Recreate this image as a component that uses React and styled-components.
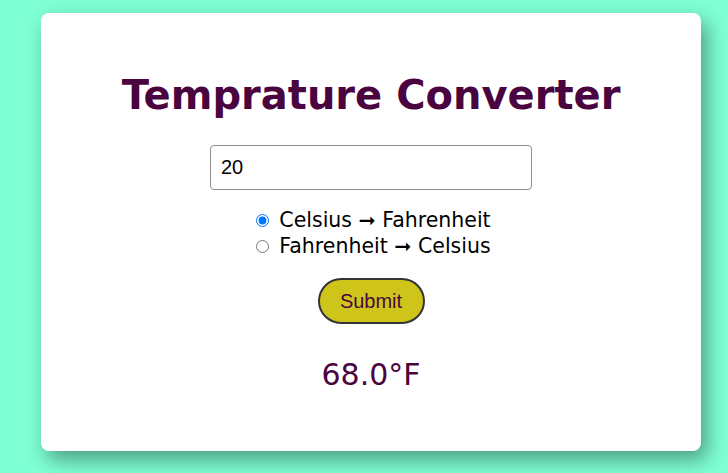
import React, { useState } from "react";
import styled, { createGlobalStyle } from "styled-components";

const GlobalStyle = createGlobalStyle`
  body {
    margin: 0;
    background: aquamarine;
    font-family: "DejaVu Sans", Verdana, sans-serif;
  }
`;

const Page = styled.div`
  min-height: 473px;
  box-sizing: border-box;
  padding: 13px 27px 22px 41px;
`;

const Card = styled.div`
  background: white;
  border-radius: 8px;
  height: 438px;
  box-sizing: border-box;
  padding-top: 57px;
  display: flex;
  flex-direction: column;
  align-items: center;
  box-shadow: 6px 9px 20px rgba(0, 0, 0, 0.38);
`;

const Title = styled.h1`
  margin: 0 0 25px 0;
  font-size: 40px;
  line-height: 50px;
  font-weight: bold;
  color: #4a0540;
`;

const Input = styled.input`
  width: 322px;
  height: 45px;
  box-sizing: border-box;
  border: 1px solid #8f8f8f;
  border-radius: 4px;
  padding: 0 10px;
  font-family: "Liberation Sans", Arial, sans-serif;
  font-size: 20px;
  color: black;
  outline: none;
`;

const Options = styled.div`
  margin-top: 17px;
  display: flex;
  flex-direction: column;
`;

const Option = styled.label`
  display: flex;
  align-items: center;
  font-size: 20.5px;
  line-height: 26px;
  color: black;

  input {
    margin: 0 10px 0 5px;
    width: 13px;
    height: 13px;
  }
`;

const SubmitButton = styled.button`
  margin-top: 19px;
  width: 107px;
  height: 46px;
  border-radius: 23px;
  border: 2px solid #333;
  background: #cfc51a;
  color: #4a0540;
  font-family: "Liberation Sans", Arial, sans-serif;
  font-size: 20px;
`;

const Result = styled.div`
  margin-top: 33px;
  font-size: 30px;
  color: #4a0540;
`;

export default function App() {
  const [value, setValue] = useState("20");
  const [mode, setMode] = useState("c2f");

  return (
    <>
      <GlobalStyle />
      <Page>
        <Card>
          <Title>Temprature Converter</Title>
          <Input value={value} onChange={(e) => setValue(e.target.value)} />
          <Options>
            <Option>
              <input
                type="radio"
                name="mode"
                checked={mode === "c2f"}
                onChange={() => setMode("c2f")}
              />
              Celsius ➞ Fahrenheit
            </Option>
            <Option>
              <input
                type="radio"
                name="mode"
                checked={mode === "f2c"}
                onChange={() => setMode("f2c")}
              />
              Fahrenheit ➞ Celsius
            </Option>
          </Options>
          <SubmitButton>Submit</SubmitButton>
          <Result>68.0°F</Result>
        </Card>
      </Page>
    </>
  );
}
